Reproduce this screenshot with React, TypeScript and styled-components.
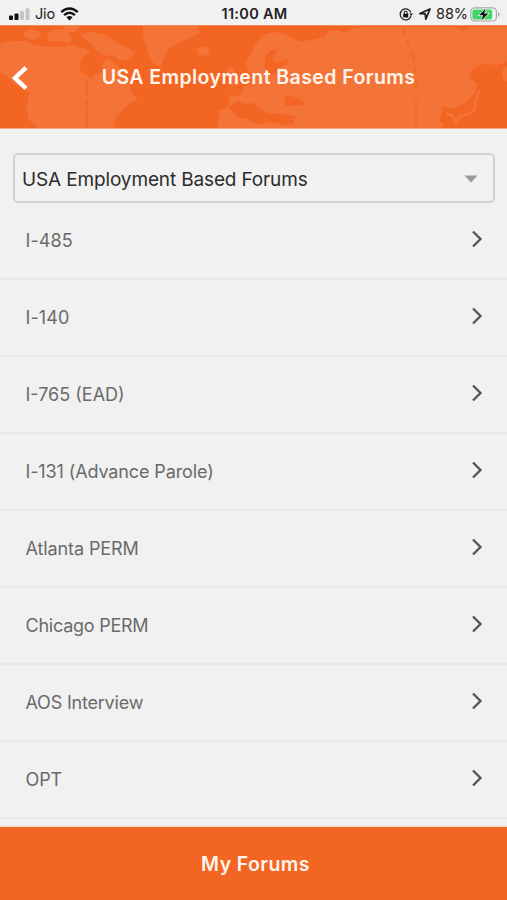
import React from 'react';
import styled, { createGlobalStyle } from 'styled-components';

const GlobalStyle = createGlobalStyle`
  * { box-sizing: border-box; }
  body { margin: 0; background: #f1f1f1; }
`;

const Screen = styled.div`
  width: 507px;
  height: 900px;
  display: flex;
  flex-direction: column;
  overflow: hidden;
  background: #f1f1f1;
  font-family: Inter, 'Liberation Sans', sans-serif;
`;

const StatusBar = styled.div`
  flex: none;
  height: 25px;
  display: grid;
  grid-template-columns: 1fr auto 1fr;
  align-items: center;
  padding: 3px 7px 0 9px;
  color: #222;
  font-size: 14px;
  line-height: 20px;
`;

const StatusGroup = styled.div<{ $end?: boolean }>`
  display: flex;
  align-items: center;
  justify-content: ${(p) => (p.$end ? 'flex-end' : 'flex-start')};
`;

const Carrier = styled.span`
  margin: 0 5px 0 5px;
  font-size: 14.5px;
  letter-spacing: -0.2px;
`;

const Clock = styled.span`
  font-weight: 600;
  font-size: 14.5px;
  letter-spacing: 0.3px;
`;

const Percent = styled.span`
  margin: 0 2px 0 5px;
  font-size: 14.5px;
  letter-spacing: -0.1px;
`;

const LocationSlot = styled.span`
  display: flex;
  margin-left: 6px;
`;

const Header = styled.header`
  flex: none;
  display: grid;
  height: 104px;
  background: #f26522;
  border-top: 1px solid #f58a58;
  border-bottom: 1px solid #f7a680;
`;

const MapArt = styled.svg`
  grid-area: 1 / 1;
  display: block;
  width: 507px;
  height: 102px;
`;

const HeaderRow = styled.div`
  grid-area: 1 / 1;
  display: grid;
  grid-template-columns: 40px 1fr 30px;
  align-items: center;
  z-index: 1;
`;

const BackButton = styled.button`
  border: 0;
  padding: 1px 0 0 11px;
  background: none;
  display: flex;
`;

const Title = styled.h1`
  margin: 0;
  text-align: center;
  color: #fff5ed;
  font-size: 19.5px;
  line-height: 28px;
  font-weight: 600;
  letter-spacing: 0.42px;
  white-space: nowrap;
`;

const Select = styled.button`
  flex: none;
  height: 50px;
  margin: 24px 12px 0 13px;
  padding: 1px 15px 0 7px;
  display: flex;
  align-items: center;
  justify-content: space-between;
  border: 2px solid #d2d2d2;
  border-radius: 5px;
  background: #f1f1f1;
  color: #2c2c2c;
  font-family: inherit;
  font-size: 19px;
  text-align: left;
`;

const SelectLabel = styled.span`
  padding-top: 1px;
  letter-spacing: -0.14px;
  white-space: nowrap;
`;

const List = styled.ul`
  flex: 1;
  min-height: 0;
  margin: 0;
  padding: 0;
  list-style: none;
  overflow: hidden;
`;

const Row = styled.li`
  height: 77px;
  padding: 0 24px 0 25.5px;
  display: flex;
  align-items: center;
  justify-content: space-between;
  border-bottom: 2px solid #e8e8e8;
  color: #6a6a6a;
  font-size: 18px;
`;

const RowLabel = styled.span<{ $spacing: number }>`
  letter-spacing: ${(p) => p.$spacing}px;
  white-space: nowrap;
`;

const Chevron = styled.svg`
  display: block;
  width: 12px;
  height: 18px;
  margin-bottom: 3px;
`;

const Footer = styled.button`
  flex: none;
  height: 75px;
  border: 0;
  border-top: 2px solid #f9e6dc;
  padding: 0 0 0 4px;
  background: #f26522;
  color: #fff5ed;
  font-family: inherit;
  font-size: 19.5px;
  font-weight: 600;
  letter-spacing: 0.4px;
`;

const forums = [
  { name: 'I-485', spacing: 0.1 },
  { name: 'I-140', spacing: 0.1 },
  { name: 'I-765 (EAD)', spacing: 0 },
  { name: 'I-131 (Advance Parole)', spacing: -0.12 },
  { name: 'Atlanta PERM', spacing: -0.1 },
  { name: 'Chicago PERM', spacing: -0.24 },
  { name: 'AOS Interview', spacing: -0.2 },
  { name: 'OPT', spacing: -0.1 },
];

const Signal = () => (
  <svg width="21" height="12" viewBox="0 0 21 12">
    <rect x="0" y="7.5" width="4" height="4.5" rx="1" fill="#111" />
    <rect x="5.5" y="5.5" width="4" height="6.5" rx="1" fill="#111" />
    <rect x="11" y="3" width="4" height="9" rx="1" fill="#c6c6c6" />
    <rect x="16.5" y="0.3" width="4" height="11.7" rx="1" fill="#c6c6c6" />
  </svg>
);

const Wifi = () => (
  <svg width="19" height="14" viewBox="0 0 19 14" fill="none" stroke="#111" strokeWidth="2.4">
    <path d="M1.2 5.2Q9.5 -2.3 17.8 5.2" />
    <path d="M4.1 8.2Q9.5 3.2 14.9 8.2" />
    <path d="M6.4 10.3Q9.5 7.6 12.6 10.3L9.5 13.5Z" fill="#111" stroke="none" />
  </svg>
);

const RotationLock = () => (
  <svg width="14" height="13" viewBox="0 0 14 13" fill="none" stroke="#222">
    <path d="M11.9 4.6A5.5 5.5 0 1 0 12 7.9" strokeWidth="1.3" />
    <path d="M10.2 5.5H14L12.1 8.1Z" fill="#222" stroke="none" />
    <rect x="4.2" y="5.8" width="5" height="3.8" rx="0.5" fill="#111" stroke="none" />
    <path d="M5.2 6V4.7a1.5 1.5 0 0 1 3 0V6" strokeWidth="1.1" />
  </svg>
);

const Location = () => (
  <svg width="12" height="12" viewBox="0 0 12 12">
    <path d="M0.9 5.6L11 1L6.8 11.1L6.3 5.9Z" fill="none" stroke="#222" strokeWidth="1.8" strokeLinejoin="round" />
  </svg>
);

const Battery = () => (
  <svg width="30" height="15" viewBox="0 0 30 15">
    <rect x="0.8" y="0.8" width="25.6" height="13.2" rx="3.8" fill="#f5f5f5" stroke="#a5a5a5" strokeWidth="1.2" />
    <rect x="2.4" y="2.4" width="19.8" height="10" rx="2.2" fill="#42d765" />
    <path d="M28 5v5q1.6-.7 1.6-2.5T28 5Z" fill="#a5a5a5" />
    <path
      d="M15.6 1.4L9 8.3H13L11.4 13.6L18.4 6.5H14.2Z"
      fill="#111"
      stroke="#effff1"
      strokeWidth="1.3"
      paintOrder="stroke"
    />
  </svg>
);

const WorldMap = () => (
  <MapArt viewBox="0 26 507 102" preserveAspectRatio="none">
    <g fill="#f47438">
      <path d="M0 44L10 41L25 41L32 44L48 47L62 47L72 45L82 48L90 51L84 57L80 62L80 70L86 75L91 78L96 74L103 72L102 64L106 58L112 61L118 66L122 76L129 84L131 92L138 99L130 103L122 111L116 117L113 128H38L29 120L26 108L29 93L22 88L13 83L7 76L0 73Z" />
      <path d="M24 32L30 29L41 32L39 38L33 40L25 37Z" />
      <path d="M47 34L55 29L65 30L72 38L70 43L57 41L49 42Z" />
      <path d="M63 26H80L73 33L66 32Z" />
      <path d="M80 35L91 32L103 34L111 38L118 44L127 47L135 53L130 60L120 61L113 55L104 56L96 50L90 43Z" />
      <path d="M143 26H198L200 33L188 39L177 44L168 49L165 56L161 66L154 64L149 56L146 45L143 36Z" />
      <path d="M196 49L205 46L210 50L208 55L199 56Z" />
      <path d="M229 67L234 69L234 76L239 81L238 86L228 85L230 78L226 73Z" />
      <path d="M248 59L252 51L257 42L263 35L273 32L284 34L292 38L301 42L314 39L326 36L328 31L337 30L344 33L351 29L365 27H455L462 31L471 27H507V61L495 67L486 64L477 66L470 72L469 77L477 84L475 94L465 103L453 109L443 106L441 115L452 121L440 128H218L219 110L229 107L229 95L240 96L243 87L248 85L255 78L248 70L246 63Z" />
    </g>
    <g fill="#f26522">
      <path d="M266 55L273 49L277 51L273 58L275 63L284 61L289 58L285 66L278 68L275 75L269 74L264 66Z" />
      <path d="M229 108L237 101L245 104L254 103L260 109L268 113L280 114L296 116L293 124L285 125L269 122L257 125L248 119L238 117Z" />
      <path d="M284 101L286 95L294 97L302 100L305 104L295 106L286 106Z" />
      <path d="M470 72L484 64L497 65L507 62V128H446L440 121L443 109L449 113L457 107L465 103L475 94L478 82L469 78Z" />
    </g>
    <path
      d="M479 90L476 101L474 111L466 115L460 116L456 122L452 115L446 114"
      fill="none"
      stroke="#f47438"
      strokeWidth="2.5"
    />
    <ellipse cx="507" cy="74" rx="5" ry="7" fill="#f47438" />
    <path d="M87 79V128" stroke="#ef6626" strokeWidth="2.6" strokeDasharray="16 5 8 3" opacity="0.75" />
    <path
      d="M402 26L407 40L413 54L416 77V128"
      fill="none"
      stroke="#ed6828"
      strokeWidth="2.6"
      strokeDasharray="9 6 5 8"
      opacity="0.8"
    />
  </MapArt>
);

export default function App() {
  return (
    <>
      <GlobalStyle />
      <Screen>
        <StatusBar>
          <StatusGroup>
            <Signal />
            <Carrier>Jio</Carrier>
            <Wifi />
          </StatusGroup>
          <Clock>11:00 AM</Clock>
          <StatusGroup $end>
            <RotationLock />
            <LocationSlot>
              <Location />
            </LocationSlot>
            <Percent>88%</Percent>
            <Battery />
          </StatusGroup>
        </StatusBar>
        <Header>
          <WorldMap />
          <HeaderRow>
            <BackButton aria-label="Back">
              <svg width="18" height="26" viewBox="0 0 18 26">
                <path d="M15 2.6L4 13L15 23.4" fill="none" stroke="#fff" strokeWidth="4.4" />
              </svg>
            </BackButton>
            <Title>USA Employment Based Forums</Title>
          </HeaderRow>
        </Header>
        <Select>
          <SelectLabel>USA Employment Based Forums</SelectLabel>
          <svg width="14" height="8" viewBox="0 0 14 8">
            <path d="M0.5 0.5H13.5L7 7.5Z" fill="#999" />
          </svg>
        </Select>
        <List>
          {forums.map((f) => (
            <Row key={f.name}>
              <RowLabel $spacing={f.spacing}>{f.name}</RowLabel>
              <Chevron viewBox="0 0 12 18">
                <path d="M2 1.5L9.5 9L2 16.5" fill="none" stroke="#555" strokeWidth="2.3" />
              </Chevron>
            </Row>
          ))}
        </List>
        <Footer>My Forums</Footer>
      </Screen>
    </>
  );
}
